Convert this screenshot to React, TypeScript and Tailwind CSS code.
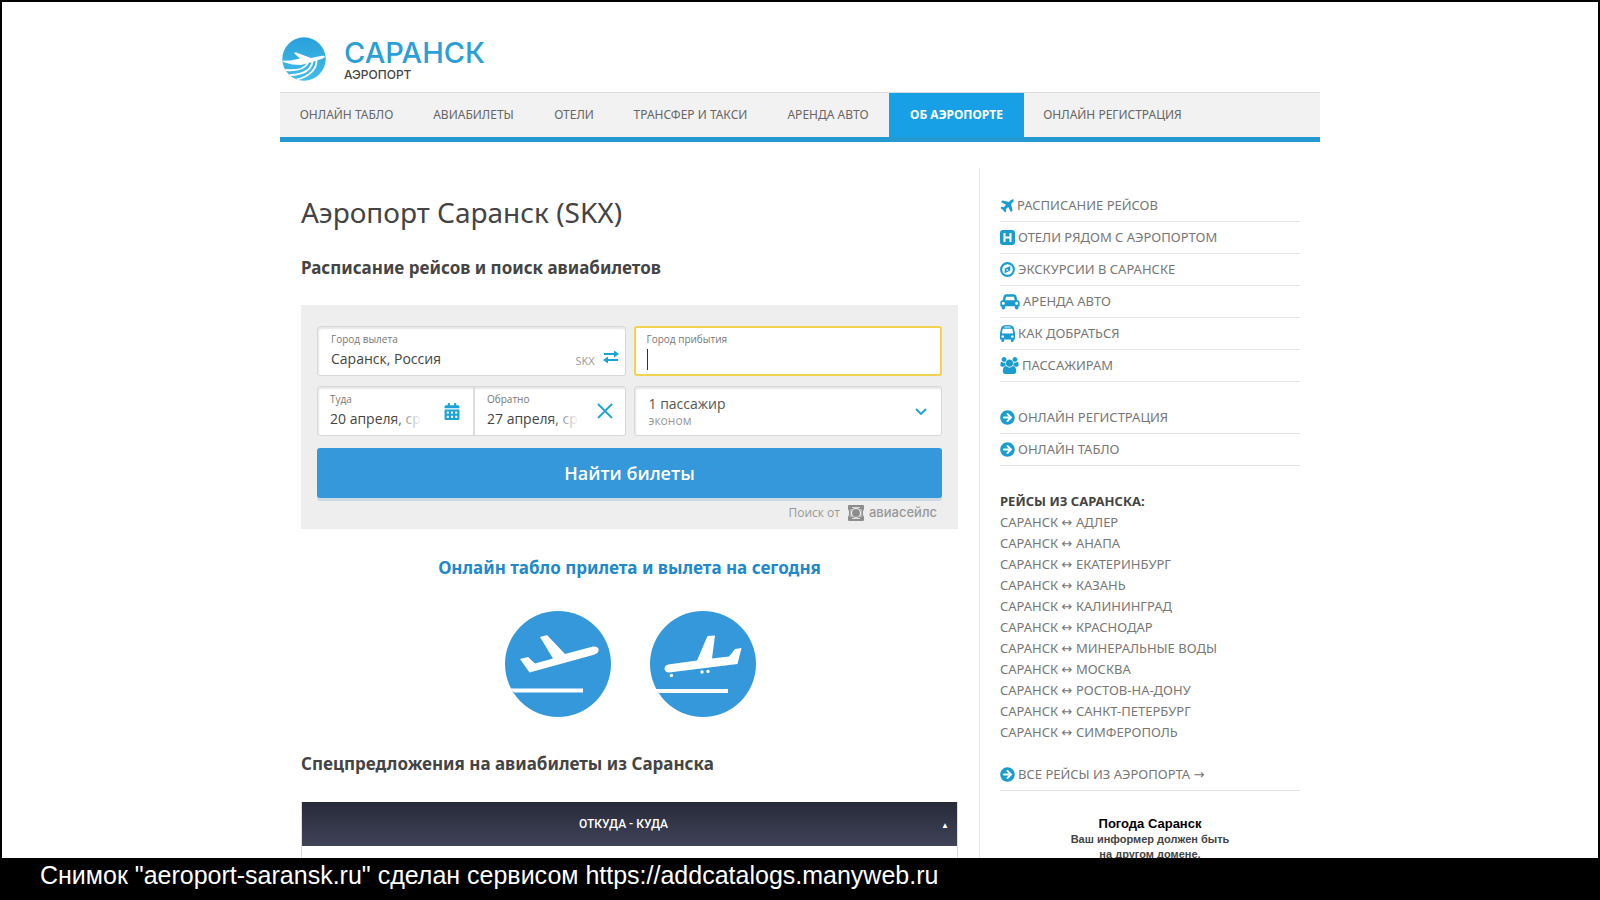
import React from 'react';
import { FaArrowCircleRight, FaCalendarAlt } from 'react-icons/fa';

const navItems = [
  { label: 'Онлайн табло', width: 'w-[133px]' },
  { label: 'Авиабилеты', width: 'w-[121px]' },
  { label: 'Отели', width: 'w-[80px]' },
  { label: 'Трансфер и такси', width: 'w-[153px]' },
  { label: 'Аренда авто', width: 'w-[122px]' },
  { label: 'Об аэропорте', width: 'w-[135px]', active: true },
  { label: 'Онлайн регистрация', width: 'w-[177px]' },
];

const destinations = [
  'Адлер',
  'Анапа',
  'Екатеринбург',
  'Казань',
  'Калининград',
  'Краснодар',
  'Минеральные Воды',
  'Москва',
  'Ростов-на-Дону',
  'Санкт-Петербург',
  'Симферополь',
];

const PlaneIcon = () => (
  <svg viewBox="128 100 1500 1500" className="w-[14px] h-[14px]" fill="currentColor">
    <path d="M1568 160q44 52 12 148t-108 172l-161 161 160 696q5 19-12 33l-128 96q-7 6-19 6-4 0-7-1-15-3-21-16l-279-508-259 259 53 194q5 17-8 31l-96 96q-9 9-23 9h-2q-15-2-24-13l-189-252-252-189q-11-7-13-23-1-13 9-25l96-97q9-9 23-9 6 0 8 1l194 53 259-259-508-279q-14-8-17-24-2-16 9-27l128-128q14-13 30-8l665 159 160-160q76-76 172-108t148 12z" />
  </svg>
);

const HotelIcon = () => (
  <svg viewBox="0 0 15 15" className="w-[15px] h-[15px]">
    <rect width="15" height="15" rx="3" fill="currentColor" />
    <path d="M4.500 3v9M10.500 3v9M4.500 7.500h6" stroke="#fff" strokeWidth="2" />
  </svg>
);

const CompassIcon = () => (
  <svg viewBox="0 0 16 16" className="w-[15px] h-[15px]" fill="none" stroke="currentColor">
    <circle cx="8" cy="8" r="6.8" strokeWidth="2.2" />
    <path d="M11 4.2v4.9l-6 2.8V7z" fill="currentColor" stroke="none" />
    <path d="M7 7.2v2.3l2.2-1.1z" fill="#fff" stroke="none" />
  </svg>
);

const CarIcon = () => (
  <svg viewBox="0 0 2048 1792" className="w-[20px] h-[17px]" fill="currentColor">
    <path d="M480 1088q0-66-47-113t-113-47-113 47-47 113 47 113 113 47 113-47 47-113zm36-320h1016l-89-357q-2-8-14-17.5t-21-9.5h-768q-9 0-21 9.5t-14 17.5zm1372 320q0-66-47-113t-113-47-113 47-47 113 47 113 113 47 113-47 47-113zm160-96v384q0 14-9 23t-23 9h-96v128q0 80-56 136t-136 56-136-56-56-136v-128h-1024v128q0 80-56 136t-136 56-136-56-56-136v-128h-96q-14 0-23-9t-9-23v-384q0-93 65.5-158.5t158.5-65.5h28l105-419q23-94 104-157.5t179-63.5h768q98 0 179 63.5t104 157.5l105 419h28q93 0 158.5 65.5t65.5 158.5z" />
  </svg>
);

const BusIcon = () => (
  <svg viewBox="0 0 1408 1792" className="w-[15px] h-[17px]" fill="currentColor" preserveAspectRatio="none">
    <path d="M384 1216q0-53-37.5-90.5t-90.5-37.5-90.5 37.5-37.5 90.5 37.5 90.5 90.5 37.5 90.5-37.5 37.5-90.5zm896 0q0-53-37.5-90.5t-90.5-37.5-90.5 37.5-37.5 90.5 37.5 90.5 90.5 37.5 90.5-37.5 37.5-90.5zm-46-396l-72-384q-5-23-22.5-37.5t-40.5-14.5h-790q-23 0-40.5 14.5t-22.5 37.5l-72 384q-5 30 14 53t49 23h934q30 0 49-23t14-53zm-226-612q0-20-14-34t-34-14h-512q-20 0-34 14t-14 34 14 34 34 14h512q20 0 34-14t14-34zm400 725v603h-128v128q0 53-37.5 90.5t-90.5 37.5-90.5-37.5-37.5-90.5v-128h-640v128q0 53-37.5 90.5t-90.5 37.5-90.5-37.5-37.5-90.5v-128h-128v-603q0-112 25-223l103-454q9-78 97.5-137t230-89 248.500-30 248.500 30 230 89 97.5 137l105 454q23 102 23 223z" />
  </svg>
);

const UsersIcon = () => (
  <svg viewBox="0 0 1920 1792" className="w-[19px] h-[17px]" fill="currentColor">
    <path d="M593 896q-162 5-265 128h-134q-82 0-138-40.5t-56-118.5q0-353 124-353 6 0 43.5 21t97.5 42.5 119 21.5q67 0 133-23-5 37-5 66 0 139 81 256zm1071 637q0 120-73 189.5t-194 69.5h-874q-121 0-194-69.5t-73-189.5q0-53 3.5-103.5t14-109 26.5-108.5 43-97.5 62-81 85.5-53.5 111.5-20q10 0 43 21.5t73 48 107 48 135 21.5 135-21.5 107-48 73-48 43-21.5q61 0 111.5 20t85.5 53.5 62 81 43 97.5 26.5 108.5 14 109 3.5 103.5zm-1024-1277q0 106-75 181t-181 75-181-75-75-181 75-181 181-75 181 75 75 181zm704 384q0 159-112.5 271.5t-271.5 112.5-271.5-112.5-112.5-271.5 112.5-271.5 271.5-112.5 271.5 112.5 112.5 271.5zm576 225q0 78-56 118.5t-138 40.5h-134q-103-123-265-128 81-117 81-256 0-29-5-66 66 23 133 23 59 0 119-21.5t97.5-42.5 43.5-21q124 0 124 353zm-128-609q0 106-75 181t-181 75-181-75-75-181 75-181 181-75 181 75 75 181z" />
  </svg>
);

const ArrowIcon = () => <FaArrowCircleRight className="w-[15px] h-[15px]" />;

const Logo = () => (
  <svg viewBox="0 0 44 44" className="w-11 h-11">
    <defs>
      <linearGradient id="sky" x1="0" y1="0" x2="0" y2="1">
        <stop offset="0" stopColor="#2a9fd8" />
        <stop offset="1" stopColor="#3fbfea" />
      </linearGradient>
      <clipPath id="disc">
        <circle cx="22" cy="22" r="21.700" />
      </clipPath>
    </defs>
    <g clipPath="url(#disc)">
      <rect width="44" height="44" fill="url(#sky)" />
      <path d="M12 16c1-.6 2.300-.6 3.500 0l13.500 5 10-2c2-.4 3.500-.2 3.800.6.200 1-1.300 1.800-3.300 2.400l-11 3.500-9.500 2.500-9-.5-9-2.500-.5-1.200 8-.3 9.500-2z" fill="#fff" />
      <g fill="none" stroke="#fff" strokeWidth="1.900" strokeLinecap="round">
        <path d="M26 25.500c-2 5-9 8.500-22 7.500" />
        <path d="M30.500 25c-1.500 7-8.500 12.500-22 13" />
        <path d="M34.500 24c0 8-7 15.500-19.500 18.500" />
      </g>
    </g>
  </svg>
);

const Departure = () => (
  <svg viewBox="0 0 106 106" className="w-[106px] h-[106px]">
    <circle cx="53" cy="53" r="53" fill="#3498db" />
    <path d="M15 48l8-2 7 6.500 18-5L35 26l7-2 18 19 27-7.200c8-1.500 9 6 2 8L24.500 61.500z" fill="#fff" />
    <path d="M4 77.500h74v4H9.500z" fill="#fff" />
  </svg>
);

const Arrival = () => (
  <svg viewBox="0 0 106 106" className="w-[106px] h-[106px]">
    <circle cx="53" cy="53" r="53" fill="#3498db" />
    <path d="M18 53.500l29-4L57.500 25l7.500-.5-3 23 17-2 6-7.500 6.500-1-4 16L19 61.500c-5.500 0-6-7-1-8z" fill="#fff" />
    <circle cx="21.500" cy="64.500" r="1.700" fill="#fff" />
    <circle cx="52" cy="61" r="1.700" fill="#fff" />
    <circle cx="58" cy="60.500" r="1.700" fill="#fff" />
    <path d="M5 78h73v4H9z" fill="#fff" />
  </svg>
);

const SideLink = ({ icon, children }: { icon: React.ReactNode; children: React.ReactNode }) => (
  <li className="border-b border-[#e4e4e4]">
    <a href="#" className="flex h-[31px] items-center gap-[3px]">
      <span className="text-[#1a9ccf]">{icon}</span>
      <span>{children}</span>
    </a>
  </li>
);

const box = 'relative h-[50px] rounded-[3px] border border-[#d8d8d8] bg-white shadow-[inset_1px_2px_2px_#e6e6e6]';
const labelCls = 'block text-[10px] leading-[12px] text-[#777]';
const inputCls = 'mt-1 block w-full bg-transparent text-[14px] leading-[20px] text-[#444] outline-none';

const SearchForm = () => (
  <form className="mt-[25px] bg-[#eee] px-4 pt-[21px] pb-[6px] font-['Open_Sans',sans-serif]">
    <div className="grid grid-cols-2 gap-x-2 gap-y-[10px]">
      <div className={`${box} flex pl-[13px] pr-[6px] pt-[6px]`}>
        <div className="flex-1">
          <label htmlFor="from" className={labelCls}>Город вылета</label>
          <input id="from" className={inputCls} defaultValue="Саранск, Россия" />
        </div>
        <span className="mt-[20px] mr-2 text-[11px] leading-[16px] text-[#999]">SKX</span>
        <button type="button" aria-label="Поменять города" className="mt-[16px] h-4 text-[#1ba3d6]">
          <svg viewBox="0 0 16 14" className="w-4 h-[14px]" fill="currentColor">
            <path d="M1 3h10V.5L16 4l-5 3.500V5H1zM15 9H5V6.500L0 10l5 3.500V11h10z" />
          </svg>
        </button>
      </div>
      <div className="relative h-[50px] rounded-[3px] border-2 border-[#f2d24f] bg-white pl-[11px] pt-[5px]">
        <label htmlFor="to" className={labelCls}>Город прибытия</label>
        <input id="to" className={inputCls} />
        <span className="absolute left-[11px] top-[21px] h-[21px] w-px bg-[#333]" />
      </div>

      <div className={`${box} flex`}>
        {[
          { id: 'depart', label: 'Туда', value: '20 апреля, ср' },
          { id: 'return', label: 'Обратно', value: '27 апреля, ср' },
        ].map((d, i) => (
          <div
            key={d.id}
            className={`flex items-center justify-between pl-3 ${i ? 'flex-1 border-l-2 border-[#ddd] pr-3' : 'w-[155px] pr-[13px]'}`}
          >
            <div className="relative w-[92px] self-start pt-[6px]">
              <label htmlFor={d.id} className={labelCls}>{d.label}</label>
              <input id={d.id} className={inputCls} defaultValue={d.value} />
              <span className="pointer-events-none absolute bottom-0 right-0 h-5 w-7 bg-linear-to-r from-transparent to-white" />
            </div>
            <button type="button" aria-label={i ? 'Очистить дату' : 'Календарь'} className="text-[#1ba3d6]">
              {i ? (
                <svg viewBox="0 0 16 16" className="w-4 h-4" stroke="currentColor" strokeWidth="1.800">
                  <path d="M1 1l14 14M15 1L1 15" />
                </svg>
              ) : (
                <FaCalendarAlt className="w-4 h-[17px]" />
              )}
            </button>
          </div>
        ))}
      </div>
      <button type="button" className={`${box} flex items-center justify-between pt-[2px] pl-[14px] pr-[14px] text-left`}>
        <span>
          <span className="block text-[14px] leading-[18px] text-[#555]">1 пассажир</span>
          <span className="block text-[12px] leading-[16px] text-[#999]">эконом</span>
        </span>
        <svg viewBox="0 0 12 8" className="w-3 h-2" fill="none" stroke="#1ba3d6" strokeWidth="1.800">
          <path d="M1 1l5 5 5-5" />
        </svg>
      </button>
    </div>
    <button
      type="button"
      className="mt-3 block h-[50px] w-full rounded-[3px] bg-[#3498db] text-[18px] font-semibold text-white shadow-[0_3px_0_#ccd9e2]"
    >
      Найти билеты
    </button>
    <div className="mt-[5px] flex h-5 items-center justify-end pr-[5px] text-[12px] text-[#999]">
      Поиск от
      <svg viewBox="0 0 16 16" className="ml-2 mr-[5px] w-4 h-4">
        <path d="M1 0h14q1 0 1 1v3l-1 2v4l1 2v3q0 1-1 1H1q-1 0-1-1v-3l1-2V6L0 4V1q0-1 1-1z" fill="#8d8d8d" />
        <circle cx="8" cy="8" r="4.500" fill="none" stroke="#eee" strokeWidth="1.200" />
        <path d="M4 2.500h8M4 13.500h8M3 4v8M13 4v8" stroke="#eee" strokeWidth=".8" />
      </svg>
      <span className="font-['Inter',sans-serif] text-[13px] font-medium">авиасейлс</span>
    </div>
  </form>
);

const h2Cls = 'text-[17px] leading-[24px] font-bold';

export default function App() {
  return (
    <div className="flex h-screen flex-col overflow-hidden bg-black font-['Noto_Sans',sans-serif] text-[#444]">
      <div className="mx-[2px] mt-[2px] min-h-0 flex-1 overflow-hidden bg-white">
        <div className="mx-auto max-w-[1040px]">
          <header className="pt-[33px]">
            <a href="#" className="flex items-center gap-[18px] pl-[2px] font-['Inter',sans-serif]">
              <Logo />
              <span className="pt-[3px]">
                <span className="block text-[29px] leading-[29px] font-medium text-[#2a9fd8]">САРАНСК</span>
                <span className="block text-[12px] leading-[15px] font-medium text-[#444]">АЭРОПОРТ</span>
              </span>
            </a>
            <nav className="mt-[10px] flex h-[50px] border-t border-b-[5px] border-t-[#ddd] border-b-[#2499d2] bg-[#f2f2f2]">
              {navItems.map((item) => (
                <a
                  key={item.label}
                  href="#"
                  className={`flex items-center justify-center whitespace-nowrap text-[12px] uppercase ${item.width} ${
                    item.active ? 'bg-[#17a0e5] font-bold text-white' : 'text-[#666]'
                  }`}
                >
                  {item.label}
                </a>
              ))}
            </nav>
          </header>

          <div className="mt-[26px] flex">
            <main className="flex-1 px-[21px] pt-[26px]">
              <h1 className="text-[28px] leading-[36px]">Аэропорт Саранск (SKX)</h1>
              <h2 className={`${h2Cls} mt-[26px]`}>Расписание рейсов и поиск авиабилетов</h2>
              <SearchForm />
              <h2 className={`${h2Cls} mt-[27px] text-center text-[#2088cc]`}>
                <a href="#">Онлайн табло прилета и вылета на сегодня</a>
              </h2>
              <div className="mt-[31px] flex justify-center gap-[39px] pl-[2px]">
                <a href="#" aria-label="Вылет"><Departure /></a>
                <a href="#" aria-label="Прилет"><Arrival /></a>
              </div>
              <h2 className={`${h2Cls} mt-[35px]`}>Спецпредложения на авиабилеты из Саранска</h2>
              <table className="mt-[26px] w-full border-x border-[#ddd]">
                <thead>
                  <tr>
                    <th className="relative h-11 bg-linear-to-b from-[#272a38] to-[#404358] pr-3 font-['Roboto',sans-serif] text-[12px] font-medium text-white">
                      ОТКУДА - КУДА
                      <span className="absolute right-2 top-[18px] text-[8px]">▲</span>
                    </th>
                  </tr>
                </thead>
                <tbody>
                  <tr>
                    <td className="h-20" />
                  </tr>
                </tbody>
              </table>
            </main>

            <aside className="w-[341px] border-l border-[#e8e8e8] px-5 pt-[22px] text-[13px] leading-[21px] text-[#777] uppercase">
              <ul>
                <SideLink icon={<PlaneIcon />}>Расписание рейсов</SideLink>
                <SideLink icon={<HotelIcon />}>Отели рядом с аэропортом</SideLink>
                <SideLink icon={<CompassIcon />}>Экскурсии в Саранске</SideLink>
                <SideLink icon={<CarIcon />}>Аренда авто</SideLink>
                <SideLink icon={<BusIcon />}>Как добраться</SideLink>
                <SideLink icon={<UsersIcon />}>Пассажирам</SideLink>
              </ul>
              <ul className="mt-5">
                <SideLink icon={<ArrowIcon />}>Онлайн регистрация</SideLink>
                <SideLink icon={<ArrowIcon />}>Онлайн табло</SideLink>
              </ul>
              <h3 className="mt-[25px] font-bold text-[#444]">Рейсы из Саранска:</h3>
              <ul>
                {destinations.map((city) => (
                  <li key={city} className="h-[21px]">
                    <a href="#">
                      Саранск <span className="font-['DejaVu_Sans',sans-serif]">↔</span> {city}
                    </a>
                  </li>
                ))}
              </ul>
              <ul className="mt-4">
                <SideLink icon={<ArrowIcon />}>
                  Все рейсы из аэропорта <span className="font-['DejaVu_Sans',sans-serif]">→</span>
                </SideLink>
              </ul>
              <div className="mt-[25px] text-center font-['Liberation_Sans',sans-serif] font-bold normal-case">
                <p className="text-[13px] leading-[16px] text-black">Погода Саранск</p>
                <p className="text-[11px] leading-[15px] text-[#444]">
                  Ваш информер должен быть
                  <br />
                  на другом домене.
                </p>
              </div>
            </aside>
          </div>
        </div>
      </div>
      <footer className="h-[42px] pl-10 font-['Liberation_Sans',sans-serif] text-[25px] leading-[34px] text-white">
        Снимок "aeroport-saransk.ru" сделан сервисом https://addcatalogs.manyweb.ru
      </footer>
    </div>
  );
}
